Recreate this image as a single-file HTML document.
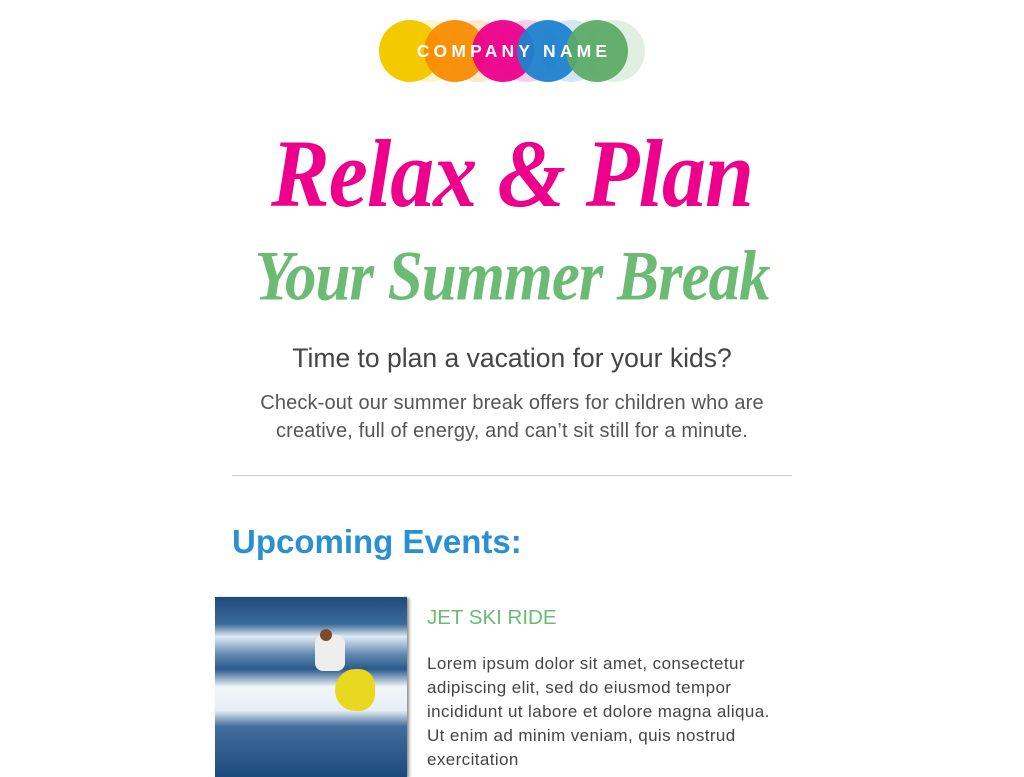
<!DOCTYPE html>
<html><head><meta charset="utf-8"><style>
body{margin:0;background:#fff;width:1024px;height:768px;overflow:hidden;font-family:"Liberation Sans",sans-serif;position:relative}
.a{position:absolute}
.c{position:absolute;border-radius:50%;width:62px;height:62px;top:20px}
.t{position:absolute;left:0;width:1024px;text-align:center}
</style></head><body>
<div class="c" style="left:398px;background:rgba(244,200,0,.2)"></div>
<div class="c" style="left:379px;background:#f4c900"></div>
<div class="c" style="left:447px;background:rgba(248,140,0,.2)"></div>
<div class="c" style="left:424px;background:rgba(248,140,0,.95)"></div>
<div class="c" style="left:496px;background:rgba(236,0,140,.2)"></div>
<div class="c" style="left:472px;background:rgba(236,0,140,.95)"></div>
<div class="c" style="left:540px;background:rgba(30,130,205,.2)"></div>
<div class="c" style="left:517px;background:rgba(30,130,205,.95)"></div>
<div class="c" style="left:583px;background:rgba(100,175,110,.2)"></div>
<div class="c" style="left:566px;background:rgba(90,170,100,.93)"></div>
<div class="t" style="top:41px;color:#fff;font-weight:bold;font-size:17.5px;letter-spacing:4.2px;left:2px">COMPANY NAME</div>
<div class="t" style="top:124px;color:#ec008c;font-family:'Liberation Serif',serif;font-style:italic;font-weight:bold;font-size:88px;letter-spacing:-1px;transform:scaleY(1.1)">Relax &amp; Plan</div>
<div class="t" style="top:240px;color:#6cbb74;font-family:'Liberation Serif',serif;font-style:italic;font-weight:bold;font-size:63px;letter-spacing:-1px;transform:scaleY(1.12)">Your Summer Break</div>
<div class="t" style="top:343px;color:#444;font-size:26.5px">Time to plan a vacation for your kids?</div>
<div class="t" style="top:389px;color:#555;font-size:20px;line-height:28px;letter-spacing:.15px">Check-out our summer break offers for children who are<br>creative, full of energy, and can’t sit still for a minute.</div>
<div class="a" style="left:232px;top:475px;width:560px;height:1px;background:#ccc"></div>
<div class="a" style="left:232px;top:523px;color:#2a8fd3;font-weight:bold;font-size:33px">Upcoming Events:</div>
<div class="a" style="left:215px;top:597px;width:192px;height:180px;box-shadow:2px 1px 3px #888;background:linear-gradient(180deg,#1f4a7c 0%,#3a6b98 15%,#dfe9f2 22%,#5f88b0 32%,#2a5a8c 40%,#f2f6fa 50%,#e6eef5 63%,#416e9c 72%,#1d4a7d 100%);overflow:hidden">
 <div class="a" style="left:100px;top:38px;width:30px;height:36px;background:#eee;border-radius:8px"></div>
 <div class="a" style="left:120px;top:72px;width:40px;height:42px;background:#e8d820;border-radius:50% 40% 40% 50%"></div>
 <div class="a" style="left:105px;top:32px;width:12px;height:12px;background:#7a4a2a;border-radius:50%"></div>
</div>
<div class="a" style="left:427px;top:606px;color:#6cbb74;font-size:20.5px">JET SKI RIDE</div>
<div class="a" style="left:427px;top:652px;color:#444;font-size:17px;line-height:24px;letter-spacing:.4px">Lorem ipsum dolor sit amet, consectetur<br>adipiscing elit, sed do eiusmod tempor<br>incididunt ut labore et dolore magna aliqua.<br>Ut enim ad minim veniam, quis nostrud<br>exercitation</div>
</body></html>
